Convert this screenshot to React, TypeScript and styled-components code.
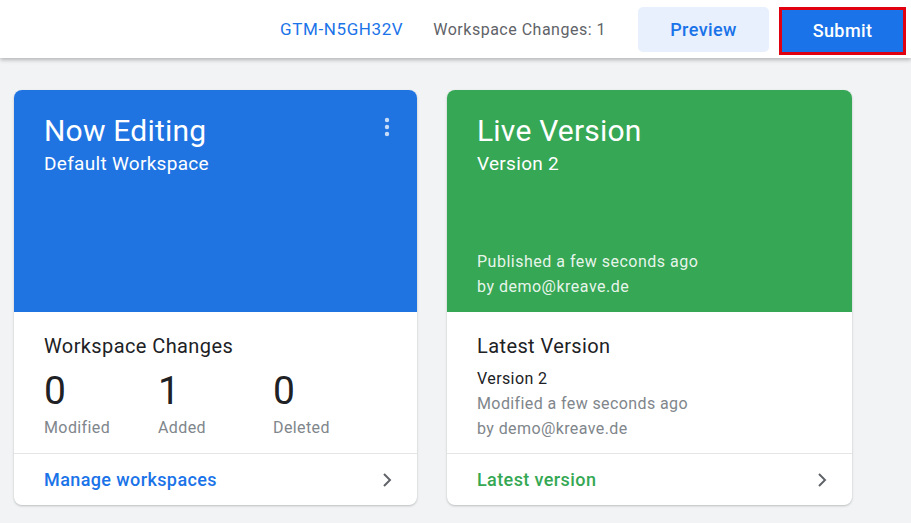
import styled, { createGlobalStyle } from "styled-components";

const GlobalStyle = createGlobalStyle`
  html, body {
    margin: 0;
    padding: 0;
    background: #f1f3f4;
    font-family: Roboto, "Noto Sans", Arial, sans-serif;
  }
`;

const Page = styled.div`
  width: 911px;
  height: 523px;
  overflow: hidden;
  background: #f1f3f4;
`;

const TopBar = styled.header`
  height: 58px;
  background: #fff;
  box-shadow: 0 2px 4px rgba(0, 0, 0, 0.25);
  display: flex;
  align-items: center;
  justify-content: flex-end;
  padding-right: 5px;
  position: relative;
  z-index: 1;
`;

const ContainerId = styled.span`
  color: #1a73e8;
  font-size: 17px;
  letter-spacing: 0.6px;
  margin-right: 30px;
`;

const ChangesCount = styled.span`
  color: #5f6368;
  font-size: 16px;
  letter-spacing: 0.5px;
  margin-right: 32px;
`;

const Button = styled.button<{ primary?: boolean }>`
  height: ${(p) => (p.primary ? "48px" : "45px")};
  width: ${(p) => (p.primary ? "127px" : "131px")};
  border-radius: ${(p) => (p.primary ? "0" : "5px")};
  border: ${(p) => (p.primary ? "3px solid #e0000f" : "none")};
  background: ${(p) => (p.primary ? "#1a73e8" : "#e8f0fe")};
  color: ${(p) => (p.primary ? "#fff" : "#1a73e8")};
  font-family: Roboto, Arial, sans-serif;
  font-size: 18px;
  font-weight: 500;
  letter-spacing: 0.4px;
  margin-left: ${(p) => (p.primary ? "10px" : "0")};
  margin-top: ${(p) => (p.primary ? "3px" : "0")};
  display: flex;
  align-items: center;
  justify-content: center;
`;

const Cards = styled.main`
  display: flex;
  gap: 30px;
  padding: 32px 0 0 14px;
`;

const Card = styled.section<{ w: number }>`
  width: ${(p) => p.w}px;
  height: 415px;
  background: #fff;
  border-radius: 8px;
  overflow: hidden;
  box-shadow: 0 1px 2px rgba(60, 64, 67, 0.2), 0 1px 3px rgba(60, 64, 67, 0.1);
  display: flex;
  flex-direction: column;
`;

const Hero = styled.div<{ bg: string }>`
  height: 222px;
  background: ${(p) => p.bg};
  color: #fff;
  padding: 23px 30px 0 30px;
  box-sizing: border-box;
  display: flex;
  flex-direction: column;
  position: relative;
`;

const HeroTitle = styled.h1`
  margin: 0;
  font-size: 30px;
  font-weight: 400;
  line-height: 36px;
  letter-spacing: 0.2px;
`;

const HeroSub = styled.div`
  font-size: 19px;
  line-height: 26px;
  margin-top: 2px;
  letter-spacing: 0.3px;
`;

const HeroMeta = styled.div`
  margin-top: auto;
  padding-bottom: 13px;
  font-size: 16px;
  line-height: 25px;
  letter-spacing: 0.5px;
  color: rgba(255, 255, 255, 0.9);
`;

const Kebab = styled.button`
  position: absolute;
  top: 27px;
  right: 27px;
  background: none;
  border: none;
  padding: 0;
  display: flex;
`;

const Body = styled.div`
  flex: 1;
  padding: 22px 30px 0 30px;
  border-bottom: 1px solid #e3e5e8;
`;

const BodyTitle = styled.h2`
  margin: 0;
  font-size: 20px;
  font-weight: 400;
  color: #202124;
  line-height: 24px;
  letter-spacing: 0.4px;
`;

const Stats = styled.div`
  display: grid;
  grid-template-columns: 114px 115px 115px;
  margin-top: 10px;
`;

const Stat = styled.div`
  display: flex;
  flex-direction: column;
`;

const StatValue = styled.span`
  font-size: 39px;
  line-height: 46px;
  color: #202124;
`;

const StatLabel = styled.span`
  font-size: 16px;
  color: #80868b;
  margin-top: 4px;
  letter-spacing: 0.4px;
`;

const VersionName = styled.div`
  margin-top: 8px;
  font-size: 16px;
  line-height: 25px;
  color: #202124;
  letter-spacing: 0.4px;
`;

const VersionMeta = styled.div`
  font-size: 16px;
  line-height: 25px;
  color: #80868b;
  letter-spacing: 0.4px;
`;

const Footer = styled.a<{ color: string }>`
  height: 51px;
  flex: none;
  display: flex;
  align-items: center;
  justify-content: space-between;
  padding: 0 19px 0 30px;
  color: ${(p) => p.color};
  font-size: 18px;
  font-weight: 500;
  letter-spacing: 0.4px;
  text-decoration: none;
`;

const Chevron = () => (
  <svg width="24" height="24" viewBox="0 0 24 24">
    <path d="M9.3 6.7 10.7 5.3 17.4 12l-6.7 6.7-1.4-1.4 5.3-5.3z" fill="#5f6368" />
  </svg>
);

const MoreIcon = () => (
  <svg width="6" height="20" viewBox="0 0 6 20">
    <circle cx="3" cy="3" r="2.2" fill="rgba(255,255,255,0.75)" />
    <circle cx="3" cy="10" r="2.2" fill="rgba(255,255,255,0.75)" />
    <circle cx="3" cy="17" r="2.2" fill="rgba(255,255,255,0.75)" />
  </svg>
);

const stats = [
  { value: 0, label: "Modified" },
  { value: 1, label: "Added" },
  { value: 0, label: "Deleted" },
];

export default function App() {
  return (
    <Page>
      <GlobalStyle />
      <TopBar>
        <ContainerId>GTM-N5GH32V</ContainerId>
        <ChangesCount>Workspace Changes: 1</ChangesCount>
        <Button>Preview</Button>
        <Button primary>Submit</Button>
      </TopBar>
      <Cards>
        <Card w={403}>
          <Hero bg="#1f74e2">
            <HeroTitle>Now Editing</HeroTitle>
            <HeroSub>Default Workspace</HeroSub>
            <Kebab>
              <MoreIcon />
            </Kebab>
          </Hero>
          <Body>
            <BodyTitle>Workspace Changes</BodyTitle>
            <Stats>
              {stats.map((s) => (
                <Stat key={s.label}>
                  <StatValue>{s.value}</StatValue>
                  <StatLabel>{s.label}</StatLabel>
                </Stat>
              ))}
            </Stats>
          </Body>
          <Footer color="#1a73e8" href="#">
            Manage workspaces
            <Chevron />
          </Footer>
        </Card>
        <Card w={405}>
          <Hero bg="#36a755">
            <HeroTitle>Live Version</HeroTitle>
            <HeroSub>Version 2</HeroSub>
            <HeroMeta>
              Published a few seconds ago
              <br />
              by demo@kreave.de
            </HeroMeta>
          </Hero>
          <Body>
            <BodyTitle>Latest Version</BodyTitle>
            <VersionName>Version 2</VersionName>
            <VersionMeta>Modified a few seconds ago</VersionMeta>
            <VersionMeta>by demo@kreave.de</VersionMeta>
          </Body>
          <Footer color="#34a853" href="#">
            Latest version
            <Chevron />
          </Footer>
        </Card>
      </Cards>
    </Page>
  );
}
